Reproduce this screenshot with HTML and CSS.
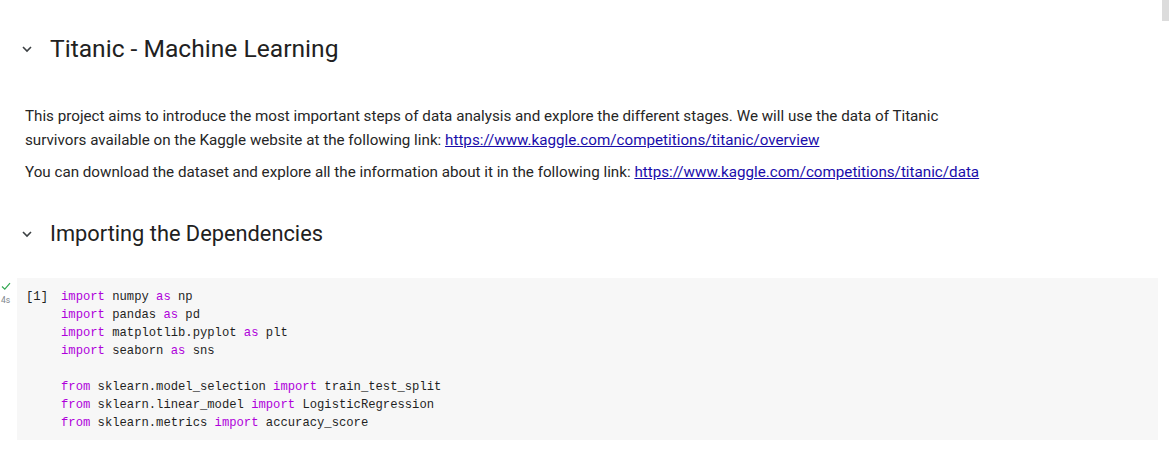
FILE: index.html
```html
<!DOCTYPE html>
<html>
<head>
<meta charset="utf-8">
<link rel="stylesheet" href="styles.css">
</head>
<body>
<div class="scroll-thumb"></div>
<div class="notebook">
  <section class="md-cell">
    <div class="heading">
      <svg class="chev" width="12" height="8" viewBox="0 0 12 8"><path d="M2 2 L6 6 L10 2" fill="none" stroke="#3c4043" stroke-width="1.6"/></svg>
      <h1>Titanic - Machine Learning</h1>
    </div>
    <div class="md-body">
      <p>This project aims to introduce the most important steps of data analysis and explore the different stages. We will use the data of Titanic<br>survivors available on the Kaggle website at the following link: <a href="#">https://www.kaggle.com/competitions/titanic/overview</a></p>
      <p>You can download the dataset and explore all the information about it in the following link: <a href="#">https://www.kaggle.com/competitions/titanic/data</a></p>
    </div>
  </section>
  <section class="md-cell md-cell-2">
    <div class="heading">
      <svg class="chev" width="12" height="8" viewBox="0 0 12 8"><path d="M2 2 L6 6 L10 2" fill="none" stroke="#3c4043" stroke-width="1.6"/></svg>
      <h2>Importing the Dependencies</h2>
    </div>
  </section>
  <section class="code-cell">
    <div class="status">
      <svg width="10" height="9" viewBox="0 0 10 9"><path d="M1 4.5 L3.8 7.2 L9 1.2" fill="none" stroke="#34a853" stroke-width="1.2"/></svg>
      <span class="time">4s</span>
    </div>
    <div class="code-box">
      <span class="exec">[1]</span>
<pre class="code"><span class="kw">import</span> numpy <span class="kw">as</span> np
<span class="kw">import</span> pandas <span class="kw">as</span> pd
<span class="kw">import</span> matplotlib.pyplot <span class="kw">as</span> plt
<span class="kw">import</span> seaborn <span class="kw">as</span> sns

<span class="kw">from</span> sklearn.model_selection <span class="kw">import</span> train_test_split
<span class="kw">from</span> sklearn.linear_model <span class="kw">import</span> LogisticRegression
<span class="kw">from</span> sklearn.metrics <span class="kw">import</span> accuracy_score</pre>
    </div>
  </section>
</div>
</body>
</html>
```

FILE: styles.css
```css
html, body {
  margin: 0;
  padding: 0;
  background: #ffffff;
}
body {
  font-family: Roboto, "Noto Sans", Arial, sans-serif;
  color: #212121;
  width: 1170px;
  height: 450px;
  overflow: hidden;
  position: relative;
}
.scroll-thumb {
  position: absolute;
  top: 0;
  right: 1px;
  width: 7px;
  height: 21px;
  background: #dcdcdc;
}
.notebook {
  padding: 31px 12px 0 0;
}
.heading {
  display: flex;
  align-items: center;
  height: 36px;
}
.chev {
  margin-left: 21px;
  margin-right: 17px;
}
h1, h2 {
  margin: 0;
  font-weight: 400;
  color: #212121;
  line-height: 36px;
}
h1 {
  font-size: 24.6px;
}
h2 {
  font-size: 21.8px;
}
.md-body {
  padding: 37px 0 0 25px;
}
.md-body p {
  margin: 0 0 8px 0;
  font-size: 15.2px;
  line-height: 24px;
  color: #262626;
}
a {
  color: #1a0dab;
  text-decoration: underline;
}
.md-cell-2 {
  margin-top: 32px;
}
.code-cell {
  margin-top: 26px;
  display: flex;
  height: 162px;
}
.status {
  width: 17px;
  flex-shrink: 0;
  display: flex;
  flex-direction: column;
  align-items: flex-start;
  padding: 4px 0 0 1px;
  box-sizing: border-box;
}
.time {
  font-size: 8.5px;
  color: #80868b;
  line-height: 10px;
  margin-top: 4px;
}
.code-box {
  flex: 1;
  display: flex;
  background: #f7f7f7;
  padding: 10px 0 0 9px;
}
.exec {
  width: 35px;
  flex-shrink: 0;
  font-family: "Liberation Mono", "DejaVu Sans Mono", monospace;
  font-size: 12.2px;
  line-height: 18px;
  color: #212121;
}
.code {
  margin: 0;
  font-family: "Liberation Mono", "DejaVu Sans Mono", monospace;
  font-size: 12.2px;
  line-height: 18px;
  color: #1f1f1f;
}
.kw {
  color: #af00db;
}
```
